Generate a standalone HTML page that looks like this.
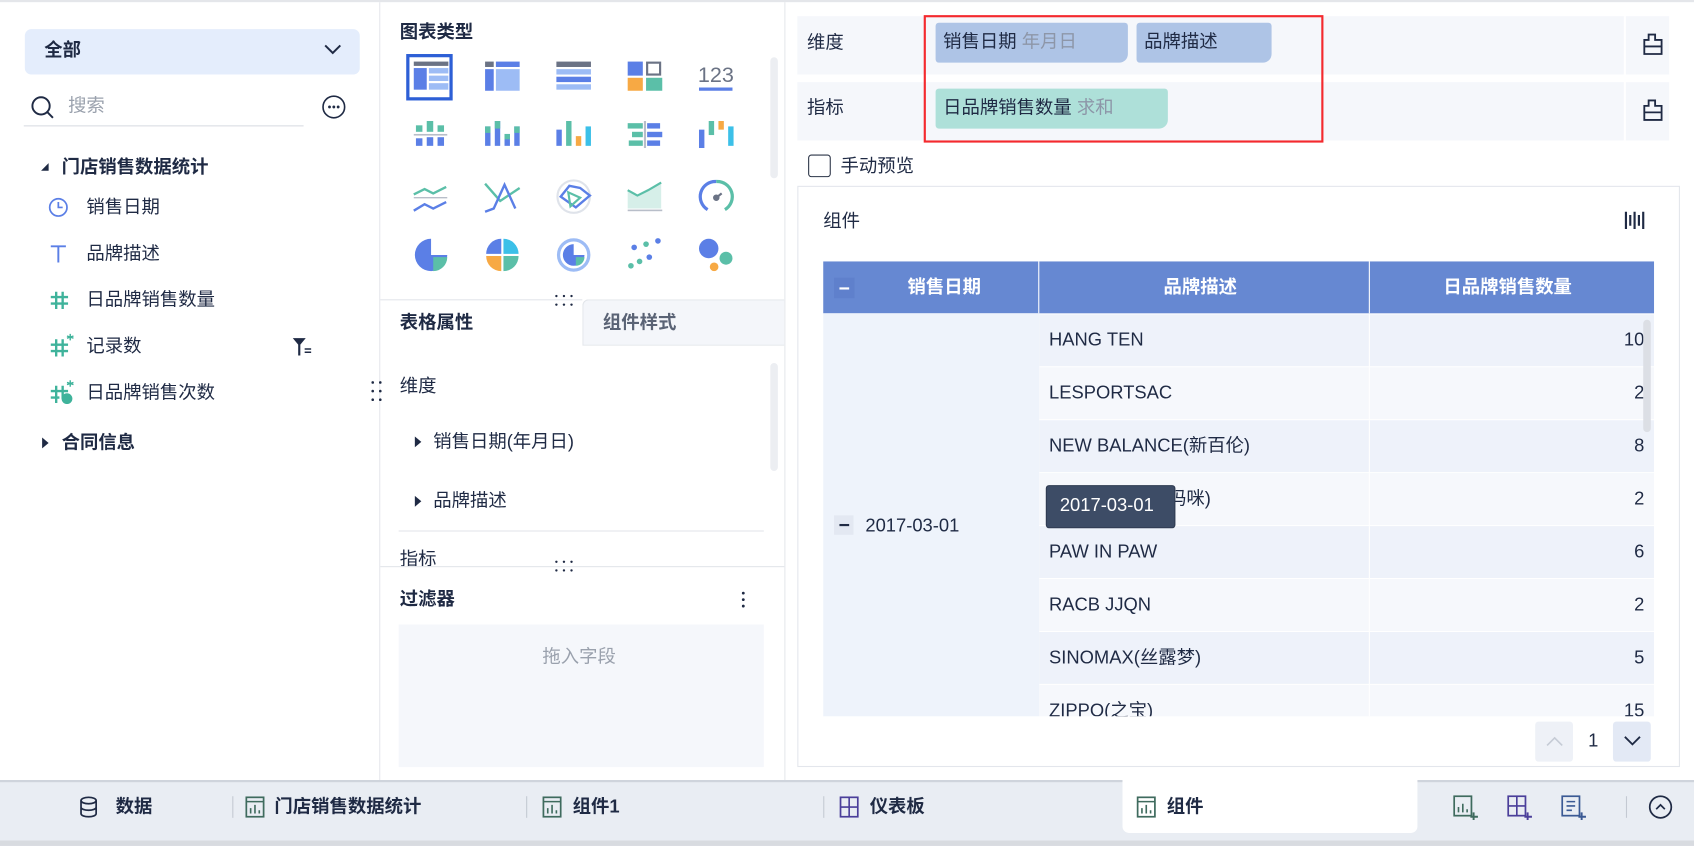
<!DOCTYPE html>
<html><head><meta charset="utf-8"><style>
*{box-sizing:border-box;margin:0;padding:0}
html,body{width:1694px;height:846px;overflow:hidden;background:#fff}
#w{position:absolute;left:0;top:0;width:1568px;height:783px;transform:scale(1.08036);transform-origin:0 0;font-family:"Liberation Sans","Noto Sans CJK SC",sans-serif;color:#1f2a44;font-size:17px;line-height:20px}
.a{position:absolute;white-space:nowrap}
.b{font-weight:bold}
.row{position:absolute;left:962px;width:569px;height:49px;border-bottom:1px solid #fff}
.row span{position:absolute;left:9px;top:14px}
.row i{position:absolute;right:9px;top:14px;font-style:normal}
.row b{position:absolute;left:305px;top:0;width:1px;height:49px;background:#fff}
.h{color:#3fb39b;font-size:21px;font-weight:bold}
</style></head><body><div id="w">
<div class="a" style="left:0;top:0;width:1568px;height:2px;background:#e4e6ea"></div>
<div class="a" style="left:351px;top:2px;width:1px;height:720px;background:#e6e8ec"></div>
<div class="a" style="left:726px;top:2px;width:1px;height:720px;background:#e6e8ec"></div>
<div class="a" style="left:23px;top:27px;width:310px;height:42px;background:#e4edfc;border-radius:6px"></div>
<div class="a b" style="left:41px;top:37px">全部</div>
<svg class="a" style="left:299px;top:40px" width="18" height="12"><path d="M2 2l7 7 7-7" fill="none" stroke="#1f2a44" stroke-width="1.8"/></svg>
<svg class="a" style="left:28px;top:88px" width="24" height="24"><circle cx="10" cy="10" r="8" fill="none" stroke="#1f2a44" stroke-width="1.8"/><path d="M16 16l5 5" stroke="#1f2a44" stroke-width="1.8"/></svg>
<div class="a" style="left:63px;top:88px;color:#9aa1ad">搜索</div>
<div class="a" style="left:22px;top:116px;width:259px;height:1px;background:#d9dce2"></div>
<svg class="a" style="left:298px;top:88px" width="24" height="24"><circle cx="11" cy="11" r="10" fill="none" stroke="#1f2a44" stroke-width="1.5"/><circle cx="7" cy="11" r="1.3" fill="#1f2a44"/><circle cx="11" cy="11" r="1.3" fill="#1f2a44"/><circle cx="15" cy="11" r="1.3" fill="#1f2a44"/></svg>
<svg class="a" style="left:37px;top:150px" width="10" height="10"><path d="M1 8L8 1V8z" fill="#1f2a44"/></svg>
<div class="a b" style="left:57px;top:145px">门店销售数据统计</div>
<svg class="a" style="left:44px;top:182px" width="20" height="20"><circle cx="10" cy="10" r="8" fill="none" stroke="#5b7fe6" stroke-width="1.6"/><path d="M10 5v5h4" fill="none" stroke="#5b7fe6" stroke-width="1.6"/></svg>
<div class="a" style="left:80px;top:182px">销售日期</div>
<svg class="a" style="left:45px;top:226px" width="18" height="18"><path d="M2 2h14M9 2v15" stroke="#5b7fe6" stroke-width="1.8"/></svg>
<div class="a" style="left:80px;top:225px">品牌描述</div>
<svg class="a" style="left:45px;top:268px" width="20" height="20"><path d="M7 2v16M13 2v16M2 7h16M2 13h16" stroke="#3fb39b" stroke-width="2.2"/></svg>
<div class="a" style="left:80px;top:268px">日品牌销售数量</div>
<svg class="a" style="left:45px;top:308px" width="24" height="24"><path d="M7 6v16M13 6v16M2 11h16M2 17h16" stroke="#3fb39b" stroke-width="2.2"/><path d="M20 1v6M17 3l6 2M23 3l-6 2" stroke="#3fb39b" stroke-width="1.3"/></svg>
<div class="a" style="left:80px;top:311px">记录数</div>
<svg class="a" style="left:270px;top:312px" width="20" height="18"><path d="M1 1h12L8 7v10H6V7z" fill="#1f2a44"/><path d="M12 11h6M12 14h6" stroke="#1f2a44" stroke-width="1.4"/></svg>
<svg class="a" style="left:45px;top:351px" width="24" height="24"><path d="M7 6v16M13 6v12M2 11h16M2 17h8" stroke="#3fb39b" stroke-width="2.2"/><path d="M20 1v6M17 3l6 2M23 3l-6 2" stroke="#3fb39b" stroke-width="1.3"/><circle cx="17" cy="18" r="5" fill="#3fb39b"/></svg>
<div class="a" style="left:80px;top:354px">日品牌销售次数</div>
<svg class="a" style="left:343px;top:351px" width="12" height="22"><g fill="#1f2a44"><circle cx="2" cy="3" r="1.2"/><circle cx="9" cy="3" r="1.2"/><circle cx="2" cy="11" r="1.2"/><circle cx="9" cy="11" r="1.2"/><circle cx="2" cy="19" r="1.2"/><circle cx="9" cy="19" r="1.2"/></g></svg>
<svg class="a" style="left:38px;top:404px" width="10" height="12"><path d="M1 1l6 5-6 5z" fill="#1f2a44"/></svg>
<div class="a b" style="left:57px;top:400px">合同信息</div>
<div class="a b" style="left:370px;top:20px">图表类型</div>
<div class="a" style="left:376px;top:50px;width:43px;height:43px;border:3px solid #2d5fd6"></div>
<div class="a" style="left:713px;top:53px;width:7px;height:112px;background:#eceef2;border-radius:4px"></div>
<svg class="a" style="left:380px;top:54px" width="310" height="210">
<g transform="translate(3,3)"><rect x="0" y="0" width="32" height="4" fill="#6b7385"/><rect x="0" y="6" width="12" height="20" fill="#5b7fe6"/><rect x="14" y="6" width="18" height="5" fill="#9dbcf5"/><rect x="14" y="13" width="18" height="5" fill="#9dbcf5"/><rect x="14" y="20" width="18" height="6" fill="#9dbcf5"/></g>
<g transform="translate(69,3)"><rect x="0" y="0" width="8" height="5" fill="#6b7385"/><rect x="10" y="0" width="22" height="5" fill="#5b7fe6"/><rect x="0" y="7" width="8" height="20" fill="#5b7fe6"/><rect x="10" y="7" width="22" height="20" fill="#9dbcf5"/></g>
<g transform="translate(135,3)"><rect x="0" y="0" width="32" height="5" fill="#6b7385"/><rect x="0" y="7" width="32" height="5" fill="#9dbcf5"/><rect x="0" y="14" width="32" height="5" fill="#5b7fe6"/><rect x="0" y="21" width="32" height="5" fill="#9dbcf5"/></g>
<g transform="translate(201,3)"><rect x="0" y="0" width="14" height="13" fill="#5b7fe6"/><rect x="18" y="1" width="12" height="11" fill="none" stroke="#6b7385" stroke-width="2"/><rect x="0" y="15" width="14" height="12" fill="#f7a944"/><rect x="17" y="15" width="15" height="12" fill="#5bbfa8"/></g>
<text x="266" y="22" font-family="Liberation Sans" font-size="20" fill="#6b7385">123</text><rect x="267" y="27" width="31" height="3" fill="#5b7fe6"/>
<g transform="translate(3,58)"><rect x="2" y="4" width="6" height="6" fill="#5bbfa8"/><rect x="12" y="0" width="6" height="10" fill="#5bbfa8"/><rect x="22" y="4" width="6" height="6" fill="#5bbfa8"/><rect x="0" y="12" width="31" height="1.5" fill="#b8bec9"/><rect x="2" y="16" width="6" height="7" fill="#5b7fe6"/><rect x="12" y="15" width="6" height="8" fill="#5b7fe6"/><rect x="22" y="15" width="6" height="8" fill="#5b7fe6"/></g>
<g transform="translate(69,58)"><rect x="0" y="5" width="5" height="18" fill="#5b7fe6"/><rect x="0" y="5" width="5" height="6" fill="#5bbfa8"/><rect x="9" y="0" width="5" height="23" fill="#5b7fe6"/><rect x="9" y="0" width="5" height="7" fill="#5bbfa8"/><rect x="18" y="12" width="5" height="11" fill="#5b7fe6"/><rect x="18" y="12" width="5" height="5" fill="#5bbfa8"/><rect x="27" y="5" width="5" height="18" fill="#5b7fe6"/><rect x="27" y="5" width="5" height="6" fill="#5bbfa8"/></g>
<g transform="translate(135,58)"><rect x="0" y="8" width="5" height="15" fill="#5b7fe6"/><rect x="9" y="0" width="5" height="23" fill="#5bbfa8"/><rect x="18" y="14" width="5" height="9" fill="#f7a944"/><rect x="27" y="5" width="5" height="18" fill="#3cc0e8"/></g>
<g transform="translate(201,58)"><rect x="0" y="2" width="14" height="5" fill="#5bbfa8"/><rect x="18" y="2" width="12" height="5" fill="#5b7fe6"/><rect x="4" y="10" width="10" height="5" fill="#5bbfa8"/><rect x="18" y="10" width="14" height="5" fill="#5b7fe6"/><rect x="1" y="18" width="13" height="5" fill="#5bbfa8"/><rect x="18" y="18" width="12" height="5" fill="#5b7fe6"/><rect x="15" y="0" width="2" height="25" fill="#b8bec9"/></g>
<g transform="translate(267,58)"><rect x="0" y="8" width="5" height="17" fill="#5b7fe6"/><rect x="9" y="0" width="5" height="13" fill="#5bbfa8"/><rect x="18" y="0" width="5" height="8" fill="#f7a944"/><rect x="27" y="5" width="5" height="18" fill="#3cc0e8"/></g>
<g transform="translate(3,116)" fill="none" stroke-width="2.2"><path d="M0 10l10-5 8 4 12-6" stroke="#5bbfa8"/><path d="M0 13h31" stroke="#b8bec9" stroke-width="1.3"/><path d="M0 25l10-6 8 4 12-6" stroke="#5b7fe6"/></g>
<g transform="translate(69,114)" fill="none" stroke-width="2.2"><path d="M0 2l14 16 18-12" stroke="#5bbfa8"/><path d="M0 28l8-3 10-22 10 22" stroke="#5b7fe6"/></g>
<g transform="translate(135,112)" fill="none"><circle cx="16" cy="16" r="15" stroke="#dfe3ea" stroke-width="2"/><path d="M4 16l8-10 10 2 9 7-13 11z" stroke="#5b7fe6" stroke-width="2.2"/><path d="M11 12l11 5-9 8z" stroke="#5bbfa8" stroke-width="2"/></g>
<g transform="translate(201,114)"><path d="M0 8l9 6 10-5 12-8v24h-31z" fill="#d6efe9"/><path d="M0 8l9 5 10-5 12-7" fill="none" stroke="#5bbfa8" stroke-width="2"/><rect x="0" y="26" width="32" height="1.5" fill="#b8bec9"/></g>
<g transform="translate(267,112)" fill="none" stroke-width="3"><path d="M8 28A14 14 0 0 1 16 2" stroke="#5b7fe6"/><path d="M16 2A14 14 0 0 1 24 28" stroke="#5bbfa8"/><circle cx="16" cy="17" r="3" fill="#6b7385" stroke="none"/><path d="M16 17l5-4" stroke="#6b7385" stroke-width="2"/></g>
<g transform="translate(3,166)"><path d="M16 1A15 15 0 1 0 31 16H16z" fill="#5b7fe6"/><path d="M18 18h13A13 13 0 0 1 18 31z" fill="#5bbfa8"/></g>
<g transform="translate(69,166)"><path d="M15 1A14 14 0 0 0 1 15h14z" fill="#5b7fe6"/><path d="M17 1A14 14 0 0 1 31 15h-14z" fill="#3cc0e8"/><path d="M1 17A14 14 0 0 0 15 31v-14z" fill="#f7a944"/><path d="M17 17h14A14 14 0 0 1 17 31z" fill="#5bbfa8"/></g>
<g transform="translate(135,166)"><circle cx="16" cy="16" r="14" fill="none" stroke="#9dbcf5" stroke-width="3"/><path d="M16 6A10 10 0 1 0 26 16H16z" fill="#5b7fe6"/><path d="M18 18h8A8 8 0 0 1 18 26z" fill="#5bbfa8"/></g>
<g transform="translate(201,166)"><circle cx="28" cy="3" r="2.6" fill="#5b7fe6"/><circle cx="17" cy="6" r="2.6" fill="#5bbfa8"/><circle cx="6" cy="9" r="2.6" fill="#5b7fe6"/><circle cx="20" cy="18" r="2.6" fill="#5b7fe6"/><circle cx="11" cy="22" r="2.6" fill="#5bbfa8"/><circle cx="3" cy="26" r="2.6" fill="#5bbfa8"/></g>
<g transform="translate(267,166)"><circle cx="9" cy="10" r="9" fill="#5b7fe6"/><circle cx="25" cy="19" r="6" fill="#5bbfa8"/><circle cx="14" cy="27" r="4" fill="#f7a944"/></g>
</svg>
<div class="a" style="left:352px;top:277px;width:187px;height:1px;background:#e2e5ea"></div>
<svg class="a" style="left:512px;top:271px" width="22" height="14"><g fill="#1f2a44"><circle cx="3" cy="3" r="1.1"/><circle cx="10" cy="3" r="1.1"/><circle cx="17" cy="3" r="1.1"/><circle cx="3" cy="11" r="1.1"/><circle cx="10" cy="11" r="1.1"/><circle cx="17" cy="11" r="1.1"/></g></svg>
<div class="a" style="left:539px;top:277px;width:187px;height:43px;background:#f4f6fa;border:1px solid #e2e5ea;border-right:none;border-radius:6px 0 0 0"></div>
<div class="a b" style="left:370px;top:289px">表格属性</div>
<div class="a b" style="left:558px;top:289px;color:#5a6375">组件样式</div>
<div class="a" style="left:713px;top:336px;width:7px;height:100px;background:#eceef2;border-radius:4px"></div>
<div class="a" style="left:370px;top:348px">维度</div>
<svg class="a" style="left:383px;top:403px" width="10" height="12"><path d="M1 1l6 5-6 5z" fill="#1f2a44"/></svg>
<div class="a" style="left:401px;top:399px">销售日期(年月日)</div>
<svg class="a" style="left:383px;top:458px" width="10" height="12"><path d="M1 1l6 5-6 5z" fill="#1f2a44"/></svg>
<div class="a" style="left:401px;top:454px">品牌描述</div>
<div class="a" style="left:369px;top:491px;width:338px;height:1px;background:#e2e5ea"></div>
<div class="a" style="left:370px;top:508px;height:16px;overflow:hidden">指标</div>
<div class="a" style="left:352px;top:524px;width:374px;height:1px;background:#e2e5ea"></div>
<svg class="a" style="left:512px;top:517px" width="22" height="14"><g fill="#1f2a44"><circle cx="3" cy="3" r="1.1"/><circle cx="10" cy="3" r="1.1"/><circle cx="17" cy="3" r="1.1"/><circle cx="3" cy="11" r="1.1"/><circle cx="10" cy="11" r="1.1"/><circle cx="17" cy="11" r="1.1"/></g></svg>
<div class="a b" style="left:370px;top:545px">过滤器</div>
<svg class="a" style="left:684px;top:546px" width="8" height="18"><g fill="#1f2a44"><circle cx="4" cy="3" r="1.3"/><circle cx="4" cy="9" r="1.3"/><circle cx="4" cy="15" r="1.3"/></g></svg>
<div class="a" style="left:369px;top:578px;width:338px;height:132px;background:#f5f7fb"></div>
<div class="a" style="left:502px;top:598px;color:#9aa1ad">拖入字段</div>
<div class="a" style="left:738px;top:15px;width:807px;height:54px;background:#f5f7fb"></div>
<div class="a" style="left:738px;top:76px;width:807px;height:54px;background:#f5f7fb"></div>
<div class="a" style="left:1503px;top:15px;width:2px;height:115px;background:#fff"></div>
<div class="a" style="left:1503px;top:69px;width:42px;height:7px;background:#fff"></div>
<div class="a" style="left:747px;top:30px">维度</div>
<div class="a" style="left:747px;top:90px">指标</div>
<div class="a" style="left:866px;top:21px;width:178px;height:37px;background:#aec4e6;border-radius:3px 3px 8px 3px"></div>
<div class="a" style="left:873px;top:29px">销售日期 <span style="color:#8d96a8">年月日</span></div>
<div class="a" style="left:1052px;top:21px;width:125px;height:37px;background:#aec4e6;border-radius:3px 3px 8px 3px"></div>
<div class="a" style="left:1059px;top:29px">品牌描述</div>
<div class="a" style="left:866px;top:82px;width:215px;height:37px;background:#aee0d9;border-radius:3px 3px 8px 3px"></div>
<div class="a" style="left:873px;top:90px">日品牌销售数量 <span style="color:#8d96a8">求和</span></div>
<div class="a" style="left:855px;top:14px;width:370px;height:118px;border:2px solid #f42a2e"></div>
<svg class="a" style="left:1520px;top:30px" width="20" height="22"><path d="M6 2h6v5h6v13H2V7h4z M2 13h16" fill="none" stroke="#1f2a44" stroke-width="1.7"/></svg>
<svg class="a" style="left:1520px;top:91px" width="20" height="22"><path d="M6 2h6v5h6v13H2V7h4z M2 13h16" fill="none" stroke="#1f2a44" stroke-width="1.7"/></svg>
<div class="a" style="left:748px;top:143px;width:21px;height:21px;border:1.5px solid #2b3447;border-radius:3px"></div>
<div class="a" style="left:778px;top:144px">手动预览</div>
<div class="a" style="left:738px;top:172px;width:817px;height:538px;border:1px solid #e3e6ec"></div>
<div class="a" style="left:762px;top:195px">组件</div>
<svg class="a" style="left:1503px;top:194px" width="20" height="20"><path d="M2 2v16M6 5v10M10 2v16M14 5v10M18 2v16" stroke="#1f2a44" stroke-width="2"/></svg>
<div class="a" style="left:762px;top:242px;width:769px;height:48px;background:#6688d2"></div>
<div class="a" style="left:961px;top:242px;width:1px;height:48px;background:#fff"></div>
<div class="a" style="left:1267px;top:242px;width:1px;height:48px;background:#fff"></div>
<div class="a" style="left:772px;top:257px;width:19px;height:19px;background:#5f80cc"></div>
<div class="a" style="left:777px;top:266px;width:9px;height:2px;background:#fff"></div>
<div class="a b" style="left:840px;top:256px;color:#fff">销售日期</div>
<div class="a b" style="left:1077px;top:256px;color:#fff">品牌描述</div>
<div class="a b" style="left:1336px;top:256px;color:#fff">日品牌销售数量</div>
<div class="a" style="left:762px;top:290px;width:200px;height:373px;background:#eef3fb"></div>
<div class="a" style="left:762px;top:290px;width:769px;height:373px;overflow:hidden">
<div style="position:absolute;left:-762px;top:-290px;width:1568px;height:783px">
<div class="row" style="top:291px;background:#eef2fa"><span>HANG TEN</span><b></b><i>10</i></div>
<div class="row" style="top:340px;background:#f6f8fc"><span>LESPORTSAC</span><b></b><i>2</i></div>
<div class="row" style="top:389px;background:#eef2fa"><span>NEW BALANCE(新百伦)</span><b></b><i>8</i></div>
<div class="row" style="top:438px;background:#f6f8fc"><span>MUMMY (小月妈咪)</span><b></b><i>2</i></div>
<div class="row" style="top:487px;background:#eef2fa"><span>PAW IN PAW</span><b></b><i>6</i></div>
<div class="row" style="top:536px;background:#f6f8fc"><span>RACB JJQN</span><b></b><i>2</i></div>
<div class="row" style="top:585px;background:#eef2fa"><span>SINOMAX(丝露梦)</span><b></b><i>5</i></div>
<div class="row" style="top:634px;background:#f6f8fc"><span>ZIPPO(之宝)</span><b></b><i>15</i></div>
</div></div>
<div class="a" style="left:1521px;top:296px;width:7px;height:104px;background:#dcdfe5;border-radius:4px"></div>
<div class="a" style="left:772px;top:477px;width:18px;height:18px;background:#e3e8f2"></div>
<div class="a" style="left:777px;top:485px;width:9px;height:1.5px;background:#1f2a44"></div>
<div class="a" style="left:801px;top:477px">2017-03-01</div>
<div class="a" style="left:968px;top:449px;width:120px;height:40px;background:#3d4c66;border-radius:3px;border:1px solid #2e3a50"></div>
<div class="a" style="left:981px;top:458px;color:#fff">2017-03-01</div>
<div class="a" style="left:1421px;top:668px;width:35px;height:37px;background:#eef1f7;border-radius:3px"></div>
<svg class="a" style="left:1430px;top:680px" width="18" height="12"><path d="M2 10l7-7 7 7" fill="none" stroke="#c6ccd6" stroke-width="1.5"/></svg>
<div class="a" style="left:1470px;top:676px">1</div>
<div class="a" style="left:1493px;top:668px;width:35px;height:37px;background:#e3e9f5;border-radius:3px"></div>
<svg class="a" style="left:1502px;top:680px" width="18" height="12"><path d="M2 2l7 7 7-7" fill="none" stroke="#1f2a44" stroke-width="1.7"/></svg>
<div class="a" style="left:0;top:722px;width:1568px;height:61px;background:#e9edf3;border-top:2px solid #cfd4dc"></div>
<div class="a" style="left:0;top:778px;width:1568px;height:5px;background:#d8dbe0"></div>
<div class="a" style="left:1039px;top:722px;width:273px;height:49px;background:#fff;border-radius:0 0 6px 6px"></div>
<svg class="a" style="left:73px;top:737px" width="18" height="20"><ellipse cx="9" cy="4" rx="7" ry="3" fill="none" stroke="#1f2a44" stroke-width="1.6"/><path d="M2 4v12c0 4 14 4 14 0V4M2 10c0 4 14 4 14 0" fill="none" stroke="#1f2a44" stroke-width="1.6"/></svg>
<div class="a b" style="left:107px;top:737px">数据</div>
<div class="a" style="left:215px;top:737px;width:1px;height:20px;background:#c4c9d2"></div>
<div class="a" style="left:487px;top:737px;width:1px;height:20px;background:#c4c9d2"></div>
<div class="a" style="left:762px;top:737px;width:1px;height:20px;background:#c4c9d2"></div>
<div class="a" style="left:1505px;top:737px;width:1px;height:20px;background:#c4c9d2"></div>
<svg class="a" style="left:227px;top:737px" width="18" height="20"><rect x="1" y="1" width="16" height="18" fill="none" stroke="#3f6b5e" stroke-width="1.6"/><path d="M1 5h16M5 16v-5M9 16v-8M13 16v-3" stroke="#3f6b5e" stroke-width="1.5"/></svg>
<div class="a b" style="left:254px;top:737px">门店销售数据统计</div>
<svg class="a" style="left:502px;top:737px" width="18" height="20"><rect x="1" y="1" width="16" height="18" fill="none" stroke="#3f6b5e" stroke-width="1.6"/><path d="M1 5h16M5 16v-5M9 16v-8M13 16v-3" stroke="#3f6b5e" stroke-width="1.5"/></svg>
<div class="a b" style="left:530px;top:737px">组件1</div>
<svg class="a" style="left:777px;top:737px" width="18" height="20"><rect x="1" y="1" width="16" height="18" fill="none" stroke="#4b3f9a" stroke-width="1.6"/><path d="M9 1v18M1 10h16" stroke="#4b3f9a" stroke-width="1.5"/></svg>
<div class="a b" style="left:805px;top:737px">仪表板</div>
<svg class="a" style="left:1052px;top:737px" width="18" height="20"><rect x="1" y="1" width="16" height="18" fill="none" stroke="#3f6b5e" stroke-width="1.6"/><path d="M1 5h16M5 16v-5M9 16v-8M13 16v-3" stroke="#3f6b5e" stroke-width="1.5"/></svg>
<div class="a b" style="left:1080px;top:737px">组件</div>
<svg class="a" style="left:1345px;top:736px" width="24" height="24"><rect x="1" y="1" width="16" height="18" fill="none" stroke="#3f6b5e" stroke-width="1.6"/><path d="M5 16v-5M9 16v-8M13 16v-3" stroke="#3f6b5e" stroke-width="1.5"/><path d="M19 16v7M16 20h7" stroke="#3f6b5e" stroke-width="1.8"/></svg>
<svg class="a" style="left:1395px;top:736px" width="24" height="24"><rect x="1" y="1" width="16" height="18" fill="none" stroke="#4b3f9a" stroke-width="1.6"/><path d="M9 1v18M1 10h16" stroke="#4b3f9a" stroke-width="1.5"/><path d="M19 16v7M16 20h7" stroke="#4b3f9a" stroke-width="1.8"/></svg>
<svg class="a" style="left:1445px;top:736px" width="24" height="24"><rect x="1" y="1" width="16" height="18" fill="none" stroke="#3b5a94" stroke-width="1.6"/><path d="M5 6h8M5 10h8M5 14h5" stroke="#3b5a94" stroke-width="1.5"/><path d="M19 16v7M16 20h7" stroke="#3b5a94" stroke-width="1.8"/></svg>
<svg class="a" style="left:1526px;top:736px" width="24" height="24"><circle cx="11" cy="11" r="10" fill="none" stroke="#1f2a44" stroke-width="1.6"/><path d="M7 13l4-4 4 4" fill="none" stroke="#1f2a44" stroke-width="1.6"/></svg>
</div></body></html>
